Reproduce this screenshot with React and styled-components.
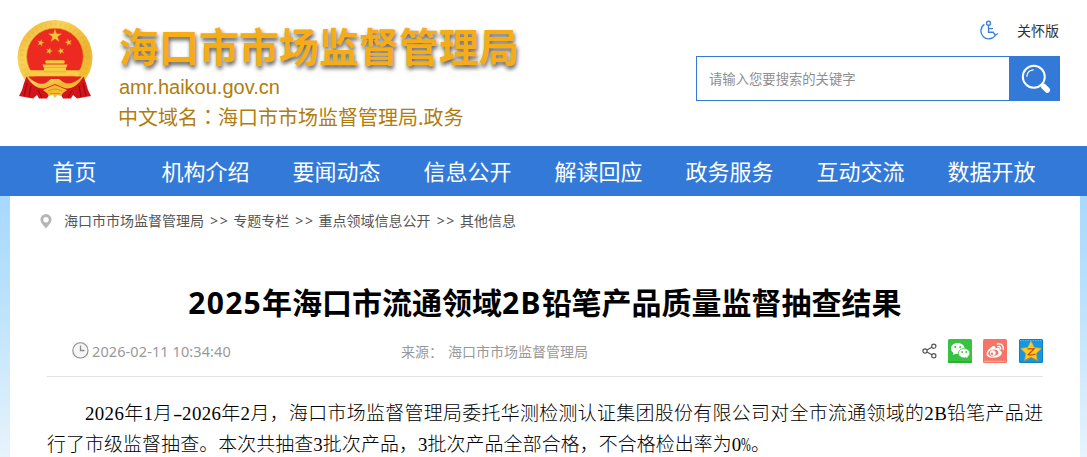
import React from "react";
import styled, { createGlobalStyle } from "styled-components";

const Global = createGlobalStyle`
  * { box-sizing: border-box; }
  body {
    margin: 0;
    background: #fff;
    font-family: "Noto Sans", "Noto Sans CJK SC", sans-serif;
    overflow: hidden;
  }
  h1, p { margin: 0; }
`;

const Page = styled.div`
  width: 1087px;
  height: 457px;
  overflow: hidden;
  display: flex;
  flex-direction: column;
`;

const Header = styled.header`
  height: 146px;
  flex: none;
  display: flex;
  justify-content: space-between;
  padding: 0 27px 0 16px;
`;

const Brand = styled.div`
  display: flex;
  gap: 24px;
  padding-top: 18px;
`;

const BrandText = styled.div`
  display: flex;
  flex-direction: column;
  white-space: nowrap;
`;

const SiteName = styled.div`
  height: 57px;
  margin-left: 1px;
  font: 700 40px/54px "Noto Sans CJK SC", sans-serif;
  color: #f6ac17;
  text-shadow: 1px 3px 4px rgba(0, 0, 0, 0.65);
`;

const Domain = styled.div`
  height: 25px;
  margin-left: 1px;
  font: 20px/24px "Liberation Sans", sans-serif;
  color: #b07d0c;
`;

const ChineseDomain = styled.div`
  height: 34px;
  font: 20px/34px "Noto Sans CJK SC", sans-serif;
  color: #b07d0c;
`;

const CenteredMark = styled.span`
  font-family: "Noto Sans CJK TC", sans-serif;
`;

const Tools = styled.div`
  width: 364px;
  display: flex;
  flex-direction: column;
`;

const CareLink = styled.div`
  height: 56px;
  padding: 3px 1px 0 0;
  display: flex;
  justify-content: flex-end;
  align-items: center;
  gap: 18px;
  font-size: 14px;
  color: #333;
`;

const Search = styled.div`
  display: flex;
  height: 45px;
`;

const SearchField = styled.div`
  flex: 1;
  border: 1px solid #337ad8;
  border-right: 0;
  padding-left: 12px;
  font-size: 13.33px;
  line-height: 44px;
  color: #8e8e8e;
`;

const SearchButton = styled.div`
  width: 51px;
  background: #337ad8;
  display: flex;
  align-items: center;
  justify-content: center;
  padding: 1px 0 0 3px;
`;

const Nav = styled.nav`
  height: 50px;
  flex: none;
  background: #337ad8;
  display: flex;
  padding-left: 9px;
`;

const NavItem = styled.div`
  width: 131px;
  text-align: center;
  font: 22px/48px "Noto Sans CJK SC", sans-serif;
  color: #fff;
`;

const Backdrop = styled.div`
  flex: 1;
  padding: 0 7px 0 10px;
  background: linear-gradient(#a7d9fe 0, #b5dffe 80px, #e7f3fb 261px);
`;

const Sheet = styled.main`
  height: 100%;
  background: #fff;
  padding: 0 37px;
`;

const Crumbs = styled.div`
  height: 50px;
  margin-left: -8px;
  display: flex;
  align-items: center;
  font-size: 14px;
  line-height: 50px;
  color: #555;
`;

const Pin = styled.svg`
  width: 12px;
  height: 15px;
  margin: 0 12px 0 1px;
`;

const Separator = styled.span`
  width: 29.3px;
  text-align: center;
  letter-spacing: 1.6px;
  padding-left: 2px;
`;

const Title = styled.h1`
  height: 72px;
  margin-top: 22px;
  padding-top: 13px;
  text-align: center;
  white-space: nowrap;
  font: 700 30px/44px "Noto Sans", "Noto Sans CJK SC", sans-serif;
  color: #000;
`;

const Latin = styled.span`
  letter-spacing: 1.25px;
`;

const Meta = styled.div`
  height: 55px;
  margin-top: -18px;
  border-bottom: 1px solid #e3e3e3;
  display: flex;
  align-items: center;
  padding: 3px 0 0 25px;
  margin-bottom: 21px;
  font-size: 14px;
  color: #999;
  white-space: nowrap;
`;

const Posted = styled.div`
  width: 329px;
  display: flex;
  align-items: center;
  gap: 3px;
  font-size: 14.5px;
  letter-spacing: 0.1px;
`;

const Source = styled.div`
  flex: 1;
`;

const SourceName = styled.span`
  margin-left: 5px;
`;

const Share = styled.div`
  display: flex;
  align-items: center;
  gap: 11px;
  padding-top: 1px;
`;

const Badge = styled.svg`
  width: 24px;
  height: 24px;
  display: block;

  &:last-child { margin-left: 1px; }
`;

const ArticleLine = styled.p`
  height: 31px;
  font: 18.9px/31px "Liberation Serif", "Noto Sans CJK SC", sans-serif;
  font-weight: 300;
  letter-spacing: ${(p) => p.$track || "0"};
  padding-left: ${(p) => (p.$indent ? "38px" : "0")};
  color: #000;
  white-space: nowrap;
`;

const HalfCell = styled.span`
  display: inline-block;
  width: 9.5px;
  text-align: center;
  letter-spacing: 0;
  transform: scaleX(${(p) => p.$scale});
  transform-origin: ${(p) => p.$origin || "center"};
`;

const starPoints = (cx, cy, r, turn = 0, inner = 0.4) =>
  Array.from({ length: 10 }, (_, i) => {
    const a = ((i * 36 - 90 + turn) * Math.PI) / 180;
    const d = i % 2 ? r * inner : r;
    return `${(cx + d * Math.cos(a)).toFixed(2)},${(cy + d * Math.sin(a)).toFixed(2)}`;
  }).join(" ");

const Emblem = () => (
  <svg width="78" height="83" viewBox="0 0 78 83">
    <defs>
      <linearGradient id="gold" x1="0" y1="0" x2="1" y2="1">
        <stop offset="0" stopColor="#e9ac27" />
        <stop offset=".3" stopColor="#f9d35a" />
        <stop offset=".65" stopColor="#edb52e" />
        <stop offset="1" stopColor="#f6c83d" />
      </linearGradient>
    </defs>
    <circle cx="39" cy="39.5" r="37.5" fill="url(#gold)" />
    <circle cx="39" cy="39.5" r="33" fill="none" stroke="#d9981b" strokeWidth="4" strokeDasharray="2 3" opacity=".14" />
    <circle cx="39" cy="38.5" r="28.3" fill="#ed2a22" stroke="#d89a1d" strokeWidth=".7" />
    <g fill="#f7c43a" stroke="#d38a18" strokeWidth=".3">
      <polygon points={starPoints(39, 18, 7)} />
      <polygon points={starPoints(24.7, 24.8, 3.6, 15)} />
      <polygon points={starPoints(52.6, 24.4, 3.6, -15)} />
      <polygon points={starPoints(33.2, 33, 3.5, 18)} />
      <polygon points={starPoints(45, 33, 3.5, -18)} />
    </g>
    <g fill="#f8cc43">
      <path d="M29 43.3 L30.5 42.3 H47.5 L49 43.3 L48 45.5 H30Z" />
      <path d="M26.5 46.5 H51.5 L50.5 49.5 H27.5Z" />
      <path d="M28 49 H50 V54 H28Z" />
      <path d="M14 52.3 H64 L63 58.5 H15Z" />
    </g>
    <path d="M29.5 45.8H48.5M28 49.5H50M28 53.8H50" stroke="#de9f24" strokeWidth=".6" />
    <path d="M12.5 58.5H65.5L60 68L39 73L18 68Z" fill="#e3231e" />
    <path d="M11.5 58 C20 67 28 67 31 64 L35 61 H43 L47 64 C52 67 60 65 66.5 58 L68.5 63 C60 71 52 73 46 69 L39 66 L32 69 C26 73 17 70 9.5 62Z" fill="url(#gold)" />
    <path d="M10.5 58.5 C17 69 25 73 33 69 L34 75 L31 80.5 H23 L21 77 L17 80.5 L3 78 L6 72 L8 65Z" fill="#d4141b" />
    <path d="M67.5 58.5 C61 69 53 73 45 69 L44 75 L47 80.5 H55 L57 77 L61 80.5 L75 78 L72 72 L70 65Z" fill="#d4141b" />
    <path d="M11 65L8 78M15 68L13 79M67 65L70 78M63 68L65 79M22 72L26 80M56 72L52 80" stroke="#8f0b12" strokeWidth="1" fill="none" />
    <path d="M27 72 L34 69 L39 67 L44 69 L51 72 L47 75 L45 78 L41 77 L39 80 L37 77 L33 78 L31 75Z" fill="#f4bd31" />
    <path d="M32 73Q39 69 46 73M34 75.5H44" stroke="#d8901d" fill="none" />
  </svg>
);

const CareIcon = () => (
  <svg width="20" height="20" viewBox="0 0 20 20" fill="none" stroke="#3d82dc" strokeWidth="1.35">
    <circle cx="9.5" cy="3.2" r="2" />
    <path d="M9.5 5.3V12.2H14.2L16.2 15.1L19 13.5M9.7 8.6H14" />
    <path d="M5.400 4.400A7.900 7.900 0 1 0 16.600 15" />
  </svg>
);

const SearchIcon = () => (
  <svg width="30" height="30" viewBox="0 0 30 30" fill="none" stroke="#fff" strokeLinecap="round">
    <circle cx="12.8" cy="12.7" r="11" strokeWidth="2" />
    <path d="M5.8 12.2A7 7 0 0 1 12.2 5.8" strokeWidth="1.3" />
    <path d="M20.5 20.5L22 22" strokeWidth="3" strokeLinecap="butt" />
    <path d="M22.7 22.5L26.3 26" strokeWidth="5.5" />
  </svg>
);

const ClockIcon = () => (
  <svg width="17" height="17" viewBox="0 0 17 17" fill="none" stroke="#8d8d8d" strokeWidth="1.1">
    <rect x=".5" y=".5" width="16" height="16" fill="#f6f6f6" stroke="none" />
    <circle cx="8.4" cy="8.4" r="7.6" />
    <path d="M8.5 3.5V8.5H12.5" strokeWidth="1.3" />
  </svg>
);

const ShareIcon = () => (
  <svg width="15" height="16" viewBox="0 0 15 16" fill="none" stroke="#555" strokeWidth="1.2">
    <circle cx="3" cy="8" r="2.1" />
    <circle cx="11.8" cy="3.2" r="2.1" />
    <circle cx="11.8" cy="12.8" r="2.1" />
    <path d="M4.9 7L9.9 4.2M4.9 9L9.9 11.8" />
  </svg>
);

const WechatBadge = () => (
  <Badge viewBox="0 0 24 24">
    <rect width="24" height="24" rx="1.5" fill="#37c23f" />
    <rect y="22" width="24" height="2" rx="1" fill="#30ac38" />
    <path d="M9.7 4C5.8 4 3 6.4 3 9.5c0 1.8.9 3.3 2.5 4.3L5 16l2.6-1.3c.7.2 1.3.2 2.1.2 3.9 0 6.9-2.3 6.9-5.4S13.6 4 9.7 4Z" fill="#fff" />
    <path d="M16.1 9.6c-3.3 0-5.7 2-5.7 4.7s2.4 4.7 5.7 4.7c.7 0 1.3-.1 1.9-.3l2.3 1.2-.6-2c1.4-.9 2.2-2.1 2.2-3.6 0-2.7-2.5-4.7-5.8-4.7Z" fill="#fff" stroke="#37c23f" strokeWidth=".8" />
    <g fill="#37c23f">
      <circle cx="7.3" cy="8" r="1" /><circle cx="12.2" cy="8" r="1" />
      <circle cx="14.2" cy="13" r=".9" /><circle cx="18.2" cy="13" r=".9" />
    </g>
  </Badge>
);

const WeiboBadge = () => (
  <Badge viewBox="0 0 24 24">
    <rect width="24" height="24" rx="1.5" fill="#f67567" />
    <path d="M1 22.3H23" stroke="#ffc6be" strokeWidth=".8" />
    <path d="M9.7 7.3c1.8-.7 3.1.1 2.5 2.1 2.9-1.2 5.3-.5 4.4 1.8 4.3 1.3 2.4 7.3-6.2 7.6C2.5 19.1.5 13.2 9.7 7.3Z" fill="#fff" />
    <ellipse cx="10.3" cy="14" rx="5.2" ry="3.4" transform="rotate(-8 10.3 14)" fill="#f67567" />
    <circle cx="9.8" cy="14.1" r="2.9" fill="#fff" />
    <circle cx="9" cy="14.8" r="1.2" fill="#f67567" />
    <path d="M14.8 7.6q3-.6 2.9 2.5M14.4 5q6.5-1 5.9 5.7" fill="none" stroke="#fff" strokeWidth="1.3" strokeLinecap="round" />
  </Badge>
);

const QzoneBadge = () => (
  <Badge viewBox="0 0 24 24">
    <rect width="24" height="24" rx="1.5" fill="#1697e2" />
    <rect x=".5" y=".5" width="23" height="23" rx="1.5" fill="none" stroke="#0e7fc7" />
    <path d="M1 1.5H23" stroke="#70c8f5" strokeWidth=".7" strokeDasharray="1.5 1" />
    <polygon points={starPoints(12, 12.8, 10.8, 0, 0.5)} fill="#ffca1d" stroke="#e8a51a" strokeWidth=".6" strokeLinejoin="round" />
    <path d="M8.5 9.900H15L9.200 15.700Q12 16.800 16.500 15" fill="none" stroke="#c0491b" strokeWidth="1.300" />
    <path d="M5.500 21.500L11.800 18.500L18.500 21.500" fill="none" stroke="#b98726" strokeWidth=".8" />
  </Badge>
);

const NAV = ["首页", "机构介绍", "要闻动态", "信息公开", "解读回应", "政务服务", "互动交流", "数据开放"];
const PATH = ["海口市市场监督管理局", "专题专栏", "重点领域信息公开", "其他信息"];

export default function App() {
  return (
    <Page>
      <Global />
      <Header>
        <Brand>
          <Emblem />
          <BrandText>
            <SiteName>海口市市场监督管理局</SiteName>
            <Domain>amr.haikou.gov.cn</Domain>
            <ChineseDomain>
              中文域名<CenteredMark>：</CenteredMark>海口市市场监督管理局.政务
            </ChineseDomain>
          </BrandText>
        </Brand>
        <Tools>
          <CareLink>
            <CareIcon />
            <span>关怀版</span>
          </CareLink>
          <Search>
            <SearchField>请输入您要搜索的关键字</SearchField>
            <SearchButton><SearchIcon /></SearchButton>
          </Search>
        </Tools>
      </Header>
      <Nav>
        {NAV.map((label) => <NavItem key={label}>{label}</NavItem>)}
      </Nav>
      <Backdrop>
        <Sheet>
          <Crumbs>
            <Pin viewBox="0 0 12 15">
              <path fillRule="evenodd" fill="#b5b5b5" d="M6 0a5.6 5.6 0 0 1 5.6 5.6C11.6 9 7.8 12 6 14.5 4.2 12 .4 9 .4 5.6A5.6 5.6 0 0 1 6 0Zm0 3a2.7 2.7 0 1 0 0 5.4A2.7 2.7 0 0 0 6 3Z" />
            </Pin>
            {PATH.map((label, i) => (
              <React.Fragment key={label}>
                {i > 0 && <Separator>&gt;&gt;</Separator>}
                <span>{label}</span>
              </React.Fragment>
            ))}
          </Crumbs>
          <Title>
            <Latin>2025</Latin>年海口市流通领域<Latin>2B</Latin>铅笔产品质量监督抽查结果
          </Title>
          <Meta>
            <Posted>
              <ClockIcon />
              <span>2026-02-11 10:34:40</span>
            </Posted>
            <Source>
              来源：<SourceName>海口市市场监督管理局</SourceName>
            </Source>
            <Share>
              <ShareIcon />
              <WechatBadge />
              <WeiboBadge />
              <QzoneBadge />
            </Share>
          </Meta>
          <ArticleLine $indent $track="0.365px">
            2026年1月<HalfCell $scale={1.5}>-</HalfCell>2026年2月，海口市场监督管理局委托华测检测认证集团股份有限公司对全市流通领域的2B铅笔产品进
          </ArticleLine>
          <ArticleLine $track="0.13px">
            行了市级监督抽查。本次共抽查3批次产品，3批次产品全部合格，不合格检出率为0<HalfCell $scale={0.62} $origin="left">%</HalfCell>。
          </ArticleLine>
        </Sheet>
      </Backdrop>
    </Page>
  );
}
